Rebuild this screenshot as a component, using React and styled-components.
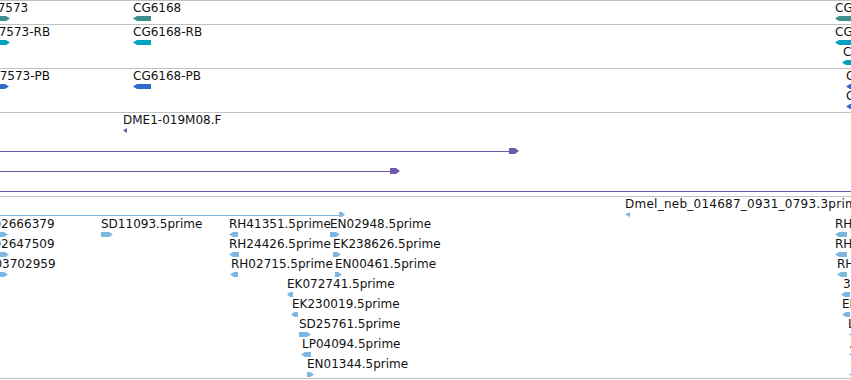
import React from 'react';
import styled, { createGlobalStyle } from 'styled-components';

const Global = createGlobalStyle`
  html, body { margin: 0; padding: 0; background: #fff; }
  body { width: 851px; height: 380px; overflow: hidden; }
`;

const TEAL = '#3d8f90';
const CYAN = '#03a1c1';
const BLUE = '#316acd';
const PURPLE = '#6d59a9';
const SKY = '#7db6de';

const Panel = styled.div`
  display: flex;
  flex-direction: column;
  width: 851px;
  height: 380px;
  overflow: hidden;
  background: #fff;
  font-family: "DejaVu Sans", "Liberation Sans", sans-serif;
`;

const Track = styled.div`
  flex: ${p => (p.$fill ? '1' : 'none')};
  height: ${p => (p.$fill ? 'auto' : `${p.$h}px`)};
  border-top: 1px solid #c2c2c2;
  display: flex;
  flex-direction: column;
  overflow: hidden;
`;

const Row = styled.div`
  position: relative;
  flex: none;
  height: 20px;
`;

/* feature labels sit on the track canvas at their genomic x */
const Label = styled.span`
  position: absolute;
  left: ${p => p.$x}px;
  top: 0;
  font-size: 12px;
  line-height: 14px;
  letter-spacing: ${p => p.$ls || 0}px;
  color: #111;
  white-space: nowrap;
`;

const GlyphSvg = styled.svg`
  position: absolute;
  left: ${p => p.$x}px;
  top: ${p => p.$top}px;
  display: block;
`;

const Intron = styled.div`
  position: absolute;
  left: ${p => p.$x}px;
  top: 18px;
  height: 1px;
  width: ${p => p.$w}px;
  background: ${p => p.$color};
`;

function Glyph({ x, w, dir, color, h = 5, top = 15 }) {
  const t = w <= 5 ? w : Math.min(4, w / 2);
  let pts;
  if (dir === 'l') pts = `0,${h / 2} ${t},0 ${w},0 ${w},${h} ${t},${h}`;
  else if (dir === 'r') pts = `0,0 ${w - t},0 ${w},${h / 2} ${w - t},${h} 0,${h}`;
  else pts = `0,0 ${w},0 ${w},${h} 0,${h}`;
  return (
    <GlyphSvg $x={x} $top={top} width={w} height={h} viewBox={`0 0 ${w} ${h}`}>
      <polygon points={pts} fill={color} />
    </GlyphSvg>
  );
}

const tracks = [
  {
    h: 23, color: TEAL,
    rows: [
      [
        { label: 'CG7573', lx: -20, x: 0, w: 10, dir: 'r' },
        { label: 'CG6168', lx: 133, x: 133, w: 18, dir: 'l' },
        { label: 'CG6171', lx: 835, x: 835, w: 18, dir: 'l' },
      ],
    ],
  },
  {
    h: 43, color: CYAN,
    rows: [
      [
        { label: 'CG7573-RB', lx: -19, x: 0, w: 10, dir: 'r' },
        { label: 'CG6168-RB', lx: 133, x: 133, w: 18, dir: 'l' },
        { label: 'CG6171-RA', lx: 835, x: 835, w: 18, dir: 'l' },
      ],
      [{ label: 'CG6171-RB', lx: 843, x: 842, w: 12, dir: 'l' }],
    ],
  },
  {
    h: 43, color: BLUE,
    rows: [
      [
        { label: 'CG7573-PB', lx: -18, x: 0, w: 9, dir: 'r' },
        { label: 'CG6168-PB', lx: 133, x: 133, w: 18, dir: 'l' },
        { label: 'CG6171-PA', lx: 846, x: 846, w: 12, dir: 'l' },
      ],
      [{ label: 'CG6171-PB', lx: 846, x: 846, w: 12, dir: 'l' }],
    ],
  },
  {
    h: 83, color: PURPLE,
    rows: [
      [{ label: 'DME1-019M08.F', lx: 123, x: 123, w: 4, dir: 'l' }],
      [{ line: 510, x: 509, w: 10, dir: 'r', h: 6 }],
      [{ line: 391, x: 390, w: 10, dir: 'r', h: 6 }],
      [{ line: 851 }],
    ],
  },
  {
    h: 181, color: SKY,
    rows: [
      [
        { line: 340, x: 339, w: 6, dir: 'r' },
        { label: 'Dmel_neb_014687_0931_0793.3prime', lx: 625, ls: 0.25, x: 625, w: 5, dir: 'l' },
      ],
      [
        { label: 'EK02666379', lx: -22, x: 0, w: 8, dir: 'r' },
        { label: 'SD11093.5prime', lx: 101, x: 101, w: 12, dir: 'r' },
        { label: 'RH41351.5prime', lx: 229, x: 229, w: 9, dir: 'l' },
        { label: 'EN02948.5prime', lx: 330, x: 330, w: 10, dir: 'r' },
        { label: 'RH54318.5prime', lx: 835, x: 835, w: 12, dir: 'l' },
      ],
      [
        { label: 'EK02647509', lx: -22, x: 0, w: 9, dir: 'r' },
        { label: 'RH24426.5prime', lx: 229, x: 229, w: 10, dir: 'l' },
        { label: 'EK238626.5prime', lx: 333, x: 333, w: 8, dir: 'r' },
        { label: 'RH61540.5prime', lx: 835, x: 835, w: 12, dir: 'l' },
      ],
      [
        { label: 'EK03702959', lx: -21, x: 0, w: 8, dir: 'r' },
        { label: 'RH02715.5prime', lx: 231, x: 230, w: 8, dir: 'l' },
        { label: 'EN00461.5prime', lx: 335, x: 335, w: 7, dir: 'r' },
        { label: 'RH70812.5prime', lx: 837, x: 837, w: 10, dir: 'l' },
      ],
      [
        { label: 'EK072741.5prime', lx: 287, x: 287, w: 6, dir: 'l' },
        { label: '3702188', lx: 843, x: 841, w: 9, dir: 'l' },
      ],
      [
        { label: 'EK230019.5prime', lx: 292, x: 291, w: 7, dir: 'l' },
        { label: 'EK113406.5prime', lx: 842, x: 842, w: 8, dir: 'l' },
      ],
      [
        { label: 'SD25761.5prime', lx: 299, x: 299, w: 12, dir: 'r' },
        { label: 'LD40212.5prime', lx: 848, x: 849, w: 4, dir: 'l' },
      ],
      [
        { label: 'LP04094.5prime', lx: 302, x: 301, w: 10, dir: 'l' },
        { label: '.', lx: 849, x: 849, w: 4, dir: 'l' },
      ],
      [
        { label: 'EN01344.5prime', lx: 307, x: 307, w: 7, dir: 'r' },
        { x: 849, w: 4, dir: 'l' },
      ],
    ],
  },
];

export default function App() {
  return (
    <>
      <Global />
      <Panel>
        {tracks.map((t, ti) => (
          <Track key={ti} $h={t.h}>
            {t.rows.map((row, ri) => (
              <Row key={ri}>
                {row.map((f, fi) => (
                  <React.Fragment key={fi}>
                    {f.line && <Intron $x={0} $w={f.line} $color={t.color} />}
                    {f.w && <Glyph x={f.x} w={f.w} dir={f.dir} h={f.h} color={t.color} />}
                    {f.label && <Label $x={f.lx} $ls={f.ls}>{f.label}</Label>}
                  </React.Fragment>
                ))}
              </Row>
            ))}
          </Track>
        ))}
        <Track $fill />
      </Panel>
    </>
  );
}
